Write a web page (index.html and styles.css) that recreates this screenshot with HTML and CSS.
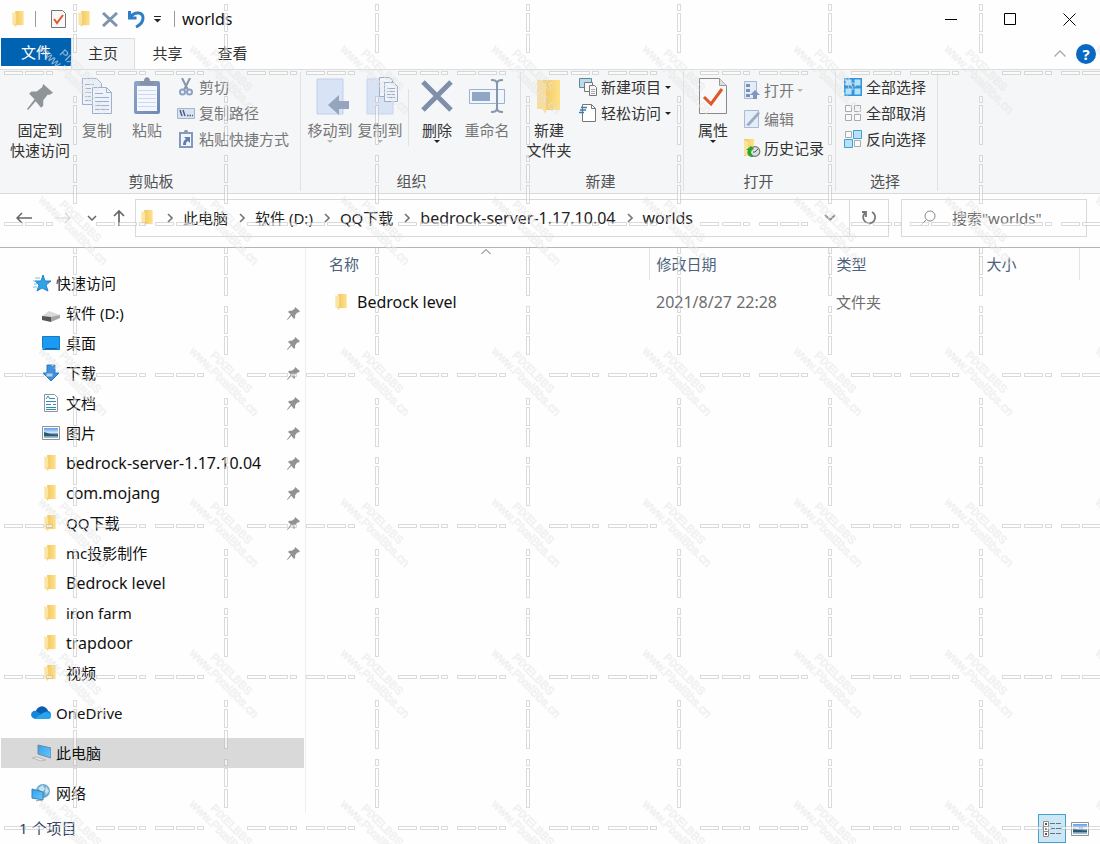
FILE: index.html
```html
<!DOCTYPE html>
<html lang="zh-CN">
<head>
<meta charset="utf-8">
<title>worlds</title>
<meta name="viewport" content="width=device-width, initial-scale=1">
<link rel="stylesheet" href="styles.css">
</head>
<body>
<svg class="sprite" aria-hidden="true">
  <defs>
    <linearGradient id="gold" x1="0" x2="1"><stop offset="0" stop-color="#f2c964"/><stop offset="1" stop-color="#ffe08a"/></linearGradient>
    <linearGradient id="board" x1="0" y1="0" x2="1" y2="1"><stop offset="0" stop-color="#8fa5c8"/><stop offset="1" stop-color="#6f88b3"/></linearGradient>
    <linearGradient id="sky" x1="0" y1="0" x2="0" y2="1"><stop offset="0" stop-color="#5b9bea"/><stop offset=".5" stop-color="#dcecf8"/><stop offset=".6" stop-color="#3c6480"/><stop offset="1" stop-color="#a9c9d9"/></linearGradient>
    <linearGradient id="screen" x1="0" y1="0" x2="1" y2="1"><stop offset="0" stop-color="#2fa0ee"/><stop offset="1" stop-color="#6cc8f8"/></linearGradient>
    <symbol id="folder" viewBox="0 0 12 17"><path d="M3 0h9v15H3z" fill="url(#gold)"/><path d="M0 1l4 2v14l-2-2H0z" fill="#fbe5a5"/><path d="M2 15l2-3v5z" fill="#f6d67e"/></symbol>
    <symbol id="pin" viewBox="0 0 24 24"><path d="M15 0l9 8-3 2-2 0-4 5 0 5-2 2-5-6-7 8-1-1 7-9-5-5 2-2 5 0 5-4z" fill="currentColor"/></symbol>
    <symbol id="more" viewBox="0 0 6 3"><path d="M0 0h6L3 3z" fill="currentColor"/></symbol>
    <symbol id="next" viewBox="0 0 6 10"><path d="M1 1l4 4-4 4" fill="none" stroke="#777" stroke-width="1.6"/></symbol>
    <symbol id="picture" viewBox="0 0 18 14"><path d="M.5.5h17v13H.5z" fill="#fff" stroke="#8c939b"/><path d="M2 2h14v10H2z" fill="url(#sky)"/><path d="M2 6c5 1 7 3 14 3v1H2z" fill="#2b5a75"/></symbol>
    <pattern id="mark" width="151" height="151" patternUnits="userSpaceOnUse">
      <g fill="#fff" fill-opacity=".6" stroke="#9a9a9a" stroke-opacity=".36">
        <path d="M4.500 71.500h18v3h-18zM25.500 71.500h18v3h-18zM46.500 71.500h6v3h-6zM96.500 71.500h18v3h-18zM118.500 71.500h18v3h-18zM139.500 71.500h6v3h-6z"/>
        <path d="M73.500 4.500h3v6h-3zM73.500 13.500h3v18h-3zM73.500 34.500h3v18h-3zM73.500 96.500h3v6h-3zM73.500 105.500h3v18h-3zM73.500 126.500h3v18h-3z"/>
      </g>
      <g class="mark-text"><text class="mark-name" transform="translate(59 54) rotate(45)">PIXELBBS</text><text transform="translate(38 50) rotate(45)">www.PixelBbs.cn</text></g>
    </pattern>
  </defs>
</svg>

<header class="titlebar">
  <svg class="folder"><use href="#folder"/></svg>
  <i class="rule"></i>
  <div class="quick">
    <button class="plain" aria-label="属性"><svg width="15" height="18" viewBox="0 0 15 18"><path d="M.5.5h11l3 3v14H.5z" fill="#f8f8f8" stroke="#777"/><path d="M3 9l3 4 6-8" fill="none" stroke="#e2562a" stroke-width="2"/></svg></button>
    <button class="plain" aria-label="新建文件夹"><svg class="folder"><use href="#folder"/></svg></button>
    <button class="plain" aria-label="删除"><svg width="16" height="15" viewBox="0 0 16 15"><path d="M1 1l14 13M15 1L1 14" stroke="#8093ad" stroke-width="3"/></svg></button>
    <button class="plain" aria-label="撤消"><svg width="17" height="18" viewBox="0 0 17 18"><path d="M1.500 1v7h7M2 7c5-6 13-5 13 1 0 4-3 7-7 9" fill="none" stroke="#2c7fc6" stroke-width="3"/></svg></button>
    <button class="plain" aria-label="自定义"><svg width="7" height="7" viewBox="0 0 7 7"><path d="M0 .5h7" stroke="#222"/><path d="M0 3h7L3.500 6.500z" fill="#222"/></svg></button>
  </div>
  <i class="rule"></i>
  <h1>worlds</h1>
  <div class="window-buttons">
    <button class="plain" aria-label="最小化"><svg width="13" height="13"><path d="M0 6.500h12" stroke="#000"/></svg></button>
    <button class="plain" aria-label="最大化"><svg width="13" height="13"><path d="M.5.5h11v11H.5z" fill="none" stroke="#000"/></svg></button>
    <button class="plain" aria-label="关闭"><svg width="13" height="13"><path d="M.5.500l12 12m0-12l-12 12" stroke="#000"/></svg></button>
  </div>
</header>

<nav class="tabs">
  <button class="tab file">文件</button><button class="tab active">主页</button><button class="tab">共享</button><button class="tab">查看</button>
  <div class="tab-tools">
    <button class="plain" aria-label="折叠功能区"><svg width="12" height="7"><path d="M.5 6.500L6 1l5.500 5.500" fill="none" stroke="#aaa" stroke-width="1.400"/></svg></button>
    <button class="help" aria-label="帮助">?</button>
  </div>
</nav>

<section class="ribbon">
  <div class="group clipboard">
    <div class="commands">
      <button class="big wide"><svg class="art pin-art" viewBox="0 0 60 38"><use href="#pin" x="17" y="7" width="26" height="26"/></svg><span>固定到<br>快速访问</span></button>
      <button class="big off"><svg class="art" viewBox="0 0 32 38"><g fill="#eef3fb" stroke="#9fb0cf"><path d="M1.500 1.500h14l5 5v21h-19z"/><path d="M11.500 10.500h14l5 5v21h-19z"/><path d="M25.500 10.500v5h5M4 7.500h9M4 11.500h6M4 15.500h6M4 19.500h6M4 23.500h6M14 16.500h8M14 20.500h14M14 24.500h14M14 28.500h14M14 32.500h14" fill="none"/></g></svg><span>复制</span></button>
      <button class="big off"><svg class="art" viewBox="0 0 32 38"><rect x="3" y="4" width="26" height="33" rx="2" fill="url(#board)"/><path d="M6 9h20v25H6z" fill="#f4f7fd"/><path d="M7 13.500h18M7 17.500h18M7 21.500h18M7 25.500h18M7 29.500h18" stroke="#cdd9ee"/><path d="M9 8V4h4c0-5 6-5 6 0h4v4z" fill="#8592a8"/></svg><span>粘贴</span></button>
      <div class="stack">
        <button class="small off"><svg viewBox="0 0 18 18"><path d="M5 0l6 12M13 0L7 12" stroke="#8794a9" stroke-width="2"/><g fill="none" stroke="#8ba0c2" stroke-width="2"><circle cx="5.500" cy="14" r="2.500"/><circle cx="12.500" cy="14" r="2.500"/></g></svg>剪切</button>
        <button class="small off"><svg viewBox="0 0 18 18"><path d="M.5 4.500h17v10H.5z" fill="#d8e2f1" stroke="#a6b5cc"/><path d="M3 6l2 6M6 6l2 6M10 11.500h1.500m1 0H14m1 0h1" stroke="#445d83" stroke-width="1.400"/></svg>复制路径</button>
        <button class="small off"><svg viewBox="0 0 18 18"><path d="M3 3h12v14H3z" fill="#f2f6fc" stroke="#8198bf" stroke-width="2"/><path d="M5 4V2h2c0-3 4-3 4 0h2v2z" fill="#8b9bb4"/><path d="M7 7h6v6l-2-2c-2 1-2 2-2 4H6c0-3 1-5 3-6z" fill="#5f7db0"/></svg>粘贴快捷方式</button>
      </div>
    </div>
    <h2>剪贴板</h2>
  </div>

  <div class="group organize">
    <div class="commands">
      <button class="big off"><svg class="art" viewBox="0 0 36 38"><path d="M5 2h26v35H5z" fill="#d8e3f5" stroke="#bfd0eb"/><path d="M16 28l11-10v6h10v8H27v6z" fill="#94a5bd"/></svg><span>移动到</span><svg class="more"><use href="#more"/></svg></button>
      <button class="big off"><svg class="art" viewBox="0 0 36 38"><path d="M5 2h26v35H5z" fill="#d8e3f5" stroke="#c5d5ed"/><g fill="#f1f5fc" stroke="#9badc9"><path d="M17.500.5h10l3 3v16h-13z"/><path d="M22.500 5.500h9l4 4v15h-13z"/><path d="M25 11.500h8M25 14.500h8M25 17.500h8M25 20.500h8"/></g></svg><span>复制到</span><svg class="more"><use href="#more"/></svg></button>
      <i class="divider"></i>
      <button class="big"><svg class="art" viewBox="0 0 36 38"><path d="M4 5l28 28M32 5L4 33" stroke="#7f8fab" stroke-width="5"/></svg><span>删除</span><svg class="more"><use href="#more"/></svg></button>
      <button class="big off"><svg class="art" viewBox="0 0 38 38"><path d="M1.500 12.500h35v14h-35z" fill="#f1f5fc" stroke="#9bb2d6"/><path d="M4 15h18v9H4z" fill="#91a6c4"/><path d="M23 3c5 0 6 1 6 5v22c0 4-1 5-6 5m12-32c-5 0-6 1-6 5v22c0 4 1 5 6 5" fill="none" stroke="#8596ad" stroke-width="2"/></svg><span>重命名</span></button>
    </div>
    <h2>组织</h2>
  </div>

  <div class="group create">
    <div class="commands">
      <button class="big"><svg class="art" viewBox="0 0 36 38"><path d="M12 3h17v30H12z" fill="url(#gold)"/><path d="M6 3h5l4 5v29l-4-5H6z" fill="#f8dda0"/></svg><span>新建<br>文件夹</span></button>
      <div class="stack">
        <button class="small"><svg viewBox="0 0 18 18"><path d="M.5.5h12v9H.5z" fill="#b9dceb" stroke="#60899f"/><g fill="#f7f7f7" stroke="#777"><path d="M5.500 4.500h8v9h-8z"/><path d="M10.500 7.500h5l2 2v8h-7z"/></g><path d="M12 11.500h4m-4 2h4m-4 2h4" stroke="#aaa"/></svg>新建项目<svg class="more"><use href="#more"/></svg></button>
        <button class="small"><svg viewBox="0 0 18 18"><path d="M3.500.5h9l4 4v13h-13z" fill="#fff" stroke="#777"/><path d="M12.500.5v4h4" fill="none" stroke="#777"/><path d="M2 3.500h6M1 6h6M0 8.500h5" stroke="#347fae" stroke-width="1.500"/></svg>轻松访问<svg class="more"><use href="#more"/></svg></button>
      </div>
    </div>
    <h2>新建</h2>
  </div>

  <div class="group open">
    <div class="commands">
      <button class="big"><svg class="art" viewBox="0 0 30 38"><path d="M1.500 1.500h20l7 7v28h-27z" fill="#f9f9f9" stroke="#8a8a8a"/><path d="M21.500 1.500v7h7" fill="#ddd" stroke="#999"/><path d="M6 20l7 7 11-15" fill="none" stroke="#df582a" stroke-width="3"/></svg><span>属性</span><svg class="more"><use href="#more"/></svg></button>
      <div class="stack loose">
        <button class="small off"><svg viewBox="0 0 18 18"><path d="M1.500.5h12v17h-12z" fill="#e4ecf8" stroke="#a5b8d6"/><path d="M3 3h4v3H3zm0 5h4v3H3zm0 5h4v3H3z" fill="#7891b8"/><path d="M12 9l5 5h-3v4h-4v-4H7z" fill="#8196ba"/></svg>打开<svg class="more"><use href="#more"/></svg></button>
        <button class="small off"><svg viewBox="0 0 18 18"><path d="M1.500.5h14v17h-14z" fill="#e5edf8" stroke="#a9bad4"/><path d="M3 15L13 4l2-2 2 1-2 3L6 16z" fill="#9cacbf"/></svg>编辑</button>
        <button class="small"><svg viewBox="0 0 18 18"><path d="M1 0h10v17H1z" fill="url(#gold)"/><path d="M1 1l4 2v14l-4-1z" fill="#fae2a0"/><circle cx="12" cy="12.500" r="4.800" fill="#d8dfdf" stroke="#777" stroke-width="1.200"/><path d="M12 13l3-3m-3 3h-2" fill="none" stroke="#555"/><path d="M11 18c-5 1-8-3-6-7l-2 0 5-4 3 3-2 1c-2 3-1 5 2 7z" fill="#27a72e"/></svg>历史记录</button>
      </div>
    </div>
    <h2>打开</h2>
  </div>

  <div class="group select">
    <div class="commands">
      <div class="stack">
        <button class="small"><svg viewBox="0 0 18 18"><path d="M0 0h18v18H0z" fill="#3396dc"/><path d="M1.500 1.500h6v6h-6zm9 0h6v6h-6zm-9 9h6v6h-6zm9 0h6v6h-6z" fill="#b5e2fb"/></svg>全部选择</button>
        <button class="small"><svg viewBox="0 0 18 18"><path d="M1.500 1.500h6v6h-6zm9 0h6v6h-6zm-9 9h6v6h-6zm9 0h6v6h-6z" fill="#fafafa" stroke="#aaa"/></svg>全部取消</button>
        <button class="small"><svg viewBox="0 0 18 18"><path d="M1.500 1.500h6v6h-6zm9 9h6v6h-6z" fill="#fafafa" stroke="#aaa"/><path d="M9.500.5h8v8h-8zm-9 9h8v8h-8z" fill="#b5e2fb" stroke="#4a9bd0"/></svg>反向选择</button>
      </div>
    </div>
    <h2>选择</h2>
  </div>
</section>

<section class="navigation">
  <div class="history">
    <button class="plain" aria-label="后退"><svg width="16" height="12"><path d="M6 1L1 6l5 5M1 6h15" fill="none" stroke="#666" stroke-width="1.500"/></svg></button>
    <button class="plain" aria-label="前进"><svg width="16" height="12"><path d="M10 1l5 5-5 5M15 6H0" fill="none" stroke="#d5d5d5" stroke-width="1.200"/></svg></button>
    <button class="plain" aria-label="最近位置"><svg width="10" height="6"><path d="M1 1l4 4 4-4" fill="none" stroke="#666" stroke-width="1.500"/></svg></button>
    <button class="plain" aria-label="向上"><svg width="12" height="16"><path d="M1 6l5-5 5 5M6 1v15" fill="none" stroke="#666" stroke-width="1.700"/></svg></button>
  </div>
  <div class="address">
    <svg class="folder"><use href="#folder"/></svg>
    <svg class="next"><use href="#next"/></svg><a href="#">此电脑</a>
    <svg class="next"><use href="#next"/></svg><a href="#">软件 (D:)</a>
    <svg class="next"><use href="#next"/></svg><a href="#">QQ下载</a>
    <svg class="next"><use href="#next"/></svg><a class="latin" href="#">bedrock-server-1.17.10.04</a>
    <svg class="next"><use href="#next"/></svg><a class="latin" href="#">worlds</a>
    <button class="plain expand" aria-label="展开地址"><svg width="12" height="8"><path d="M1 1l5 5 5-5" fill="none" stroke="#888" stroke-width="1.800"/></svg></button>
    <button class="plain refresh" aria-label="刷新"><svg width="16" height="16"><path d="M4 3a6 6 0 1 0 7-1M1 2h4v5" fill="none" stroke="#777" stroke-width="1.800"/></svg></button>
  </div>
  <label class="search"><svg width="16" height="16"><circle cx="10" cy="6" r="5" fill="none" stroke="#888"/><path d="M6.500 9.500L1 15" stroke="#888"/></svg><input type="search" aria-label="搜索" placeholder='搜索"worlds"'></label>
</section>

<main class="browser">
  <aside class="tree">
    <a class="root" href="#"><svg viewBox="0 0 20 18"><path d="M12 1l2 6h6l-5 4 2 6-6-3-5 3 2-6-4-4h6z" fill="#2fa3e8" stroke="#2383c5"/><path d="M4 4h5M2 7h4M3 10h3M2 13h4" stroke="#71bde9"/></svg>快速访问</a>
    <a href="#"><svg viewBox="0 0 18 18"><path d="M0 12l7-5 11 4-8 5H1z" fill="#d9d9d9"/><path d="M0 12l9 1v5l-9-2z" fill="#555"/><path d="M9 13l9-2v3l-9 4z" fill="#a5a5a5"/></svg>软件 (D:)<svg class="pin"><use href="#pin"/></svg></a>
    <a href="#"><svg viewBox="0 0 18 18"><path d="M.5 2.500h17v13H.5z" fill="#1a9bf0" stroke="#1679c2"/><path d="M3 14.500h12" stroke="#0a69ad"/></svg>桌面<svg class="pin"><use href="#pin"/></svg></a>
    <a href="#"><svg viewBox="0 0 18 18"><path d="M5 1h8v8h4l-8 8-8-8h4z" fill="#3f91df" stroke="#2878c4"/></svg>下载<svg class="pin"><use href="#pin"/></svg></a>
    <a href="#"><svg viewBox="0 0 18 18"><path d="M2.500.5h10l3 3v14h-13z" fill="#fff" stroke="#8b969d"/><path d="M4 5l2-3 2 3M8 4.500h5M4 7.500h10M4 10.500h5m2 0h3M4 13.500h10M4 15.500h10" stroke="#328caf" fill="none"/></svg>文档<svg class="pin"><use href="#pin"/></svg></a>
    <a href="#"><svg viewBox="0 0 18 18"><use href="#picture" y="2" width="18" height="14"/></svg>图片<svg class="pin"><use href="#pin"/></svg></a>
    <a class="latin" href="#"><svg viewBox="0 0 18 18"><use href="#folder" x="2" y="1" width="12" height="16"/></svg>bedrock-server-1.17.10.04<svg class="pin"><use href="#pin"/></svg></a>
    <a class="latin" href="#"><svg viewBox="0 0 18 18"><use href="#folder" x="2" y="1" width="12" height="16"/></svg>com.mojang<svg class="pin"><use href="#pin"/></svg></a>
    <a href="#"><svg viewBox="0 0 18 18"><use href="#folder" x="2" y="1" width="12" height="16"/></svg>QQ下载<svg class="pin"><use href="#pin"/></svg></a>
    <a href="#"><svg viewBox="0 0 18 18"><use href="#folder" x="2" y="1" width="12" height="16"/></svg>mc投影制作<svg class="pin"><use href="#pin"/></svg></a>
    <a class="latin" href="#"><svg viewBox="0 0 18 18"><use href="#folder" x="2" y="1" width="12" height="16"/></svg>Bedrock level</a>
    <a href="#"><svg viewBox="0 0 18 18"><use href="#folder" x="2" y="1" width="12" height="16"/></svg>iron farm</a>
    <a class="latin" href="#"><svg viewBox="0 0 18 18"><use href="#folder" x="2" y="1" width="12" height="16"/></svg>trapdoor</a>
    <a href="#"><svg viewBox="0 0 18 18"><use href="#folder" x="2" y="1" width="12" height="16"/></svg>视频</a>
    <a class="root spaced" href="#"><svg viewBox="0 0 20 18"><path d="M2 14c-4-3-1-8 3-7 2-6 10-6 12 0 4 0 4 8 0 8H4z" fill="#1685db"/><path d="M5 7c2-6 10-6 12 0l-3 1-4 2z" fill="#0b5ead"/><path d="M3 15l9-6c3-2 8 0 8 3 0 2-1 3-3 3z" fill="#29a5ee"/></svg>OneDrive</a>
    <a class="root spaced current" href="#"><svg viewBox="0 0 20 18"><path d="M7 1l13 3v10L7 10z" fill="url(#screen)" stroke="#6c8ba2"/><path d="M1 14l5-1 9 3-5 1z" fill="#e5e5e5" stroke="#bbb"/></svg>此电脑</a>
    <a class="root spaced" href="#"><svg viewBox="0 0 20 18"><circle cx="12" cy="7" r="7" fill="#6fa9cb"/><path d="M7 4l5-3 2 4-3 4zm8-2l3 5-3 4-1-4z" fill="#c6e2ed"/><path d="M1 5l11 3v8L1 14z" fill="url(#screen)" stroke="#3184bc"/><path d="M5 17l4-1 2 1" fill="none" stroke="#999"/></svg>网络</a>
  </aside>
  <div class="files">
    <svg class="sort" viewBox="0 0 10 6"><path d="M.5 5L5 .5 9.500 5" fill="none" stroke="#666"/></svg>
    <table>
      <colgroup><col class="name-col"><col class="date-col"><col class="type-col"><col class="size-col"><col></colgroup>
      <thead><tr><th>名称</th><th>修改日期</th><th>类型</th><th>大小</th><td></td></tr></thead>
      <tbody><tr><td class="latin"><span class="file-name"><svg class="folder"><use href="#folder"/></svg>Bedrock level</span></td><td class="latin">2021/8/27 22:28</td><td>文件夹</td><td></td><td></td></tr></tbody>
    </table>
  </div>
</main>

<footer class="status">
  <span>1 个项目</span>
  <div class="views">
    <button class="plain details" aria-label="详细信息"><svg width="20" height="18"><g fill="#fff" stroke="#8d8d8d"><path d="M1.500 1.500h5v5h-5zM1.500 6.500h5v5h-5zM1.500 11.500h5v5h-5z"/></g><path d="M3 4h2m-2 5h2m-2 5h2" stroke="#844" stroke-width="2"/><path d="M8 3.500h5m1 0h5M8 8.500h5m1 0h5M8 13.500h5m1 0h5" stroke="#66747e"/></svg></button>
    <button class="plain" aria-label="大缩略图"><svg width="18" height="14"><use href="#picture"/></svg></button>
  </div>
</footer>
<svg class="overlay" aria-hidden="true"><rect width="100%" height="100%" fill="url(#mark)"/></svg>
</body>
</html>
```

FILE: styles.css
```css
* { box-sizing: border-box; }
body {
  margin: 0;
  min-height: 100vh;
  display: flex;
  flex-direction: column;
  background: #fefefe;
  color: #111;
  font: 15px/20px "Noto Sans", "Noto Sans CJK SC", sans-serif;
}
button, input { font: inherit; color: inherit; }
button { border: 0; background: none; padding: 0; }
a { color: inherit; text-decoration: none; }
h1, h2 { margin: 0; font: inherit; }
svg { display: block; flex: none; }
.latin { font-size: 16px; }
.sprite { position: absolute; width: 0; height: 0; }
.plain { display: grid; place-items: center; }
.folder { width: 12px; height: 16px; }
.overlay { position: absolute; inset: 0; width: 100%; height: 100%; pointer-events: none; }
.mark-text { font: 12px "Liberation Sans", sans-serif; fill: #fff; fill-opacity: .6; stroke: #999; stroke-width: 1px; stroke-opacity: .12; }
.mark-name { font-size: 11px; }

.titlebar { height: 38px; display: flex; align-items: center; padding: 0 24px 0 12px; }
.rule { width: 1px; height: 16px; background: #999; }
.titlebar .folder + .rule { margin-left: 11px; }
.quick { display: flex; align-items: center; gap: 12px; margin: 0 13px 0 15px; }
.quick .plain:nth-child(4) { margin-left: -2px; }
.quick .plain:nth-child(5) { margin-left: -3px; }
.titlebar h1 { font-size: 16px; margin-left: 7px; }
.window-buttons { margin-left: auto; display: flex; gap: 46px; }

.tabs { height: 31px; display: flex; padding-left: 1px; }
.tab { width: 65px; height: 31px; padding-bottom: 2px; color: #333; }
.tab.file { width: 70px; height: 28px; padding-bottom: 0; background: #0063b1; color: #fff; }
.tab.active { width: 64px; background: #f5f6f7; border: 1px solid #dcdddd; border-bottom: 0; }
.tab-tools { margin-left: auto; display: flex; align-items: center; gap: 10px; padding-right: 4px; }
.help { width: 20px; height: 20px; border-radius: 50%; background: #0869c2; color: #fff; font-weight: bold; line-height: 20px; }

.ribbon { height: 125px; display: flex; background: #f5f6f7; border-top: 1px solid #dcdddd; border-bottom: 1px solid #d8dadb; }
.group { display: flex; flex-direction: column; border-right: 1px solid #dfe1e2; margin: 2px 0; padding: 5px 0 0; }
.group h2 { margin-top: auto; padding-right: 6px; text-align: center; color: #505254; }
.commands { display: flex; align-items: flex-start; }
.clipboard { width: 301px; padding-left: 8px; }
.organize { width: 220px; padding-left: 4px; }
.organize h2 { padding-right: 2px; }
.create { width: 163px; padding-left: 3px; }
.open { width: 152px; padding-left: 4px; }
.select { width: 102px; padding-left: 3px; }
.big { width: 50px; display: flex; flex-direction: column; align-items: center; white-space: nowrap; color: #333; }
.big.wide { width: 64px; }
.big .art { height: 38px; width: 38px; margin-bottom: 5px; }
.big .pin-art { width: 60px; color: #8f9497; }
.off { color: #777; }
.big.off .more, .small.off .more { color: #b5b5b5; }
.more { width: 6px; height: 3px; color: #222; }
.stack { display: grid; gap: 6px; padding-left: 5px; }
.stack.loose { gap: 9px; padding-top: 3px; }
.small { display: flex; align-items: center; gap: 4px; white-space: nowrap; color: #333; }
.loose .small { gap: 3px; }
.small > svg:first-child { width: 18px; height: 18px; }
.small.off { color: #777; }
.divider { width: 1px; height: 57px; margin: 12px 3px 0; background: #e0e2e3; }

.navigation { height: 54px; border-bottom: 1px solid #b4b4b4; display: flex; padding: 5px 13px 10px 16px; }
.history { width: 119px; display: flex; align-items: center; gap: 20px; }
.history .plain:nth-child(2) { margin-left: 3px; }
.history .plain:nth-child(n+3) { margin-left: -4px; }
.address { flex: 1; border: 1px solid #d9d9d9; display: flex; align-items: center; padding-left: 5px; white-space: nowrap; }
.address a { color: #222; }
.next { width: 6px; height: 10px; margin: 0 10px 0 11px; }
.address .folder + .next { margin-left: 14px; }
.expand { margin-left: auto; width: 38px; }
.refresh { width: 39px; height: 100%; border-left: 1px solid #d9d9d9; }
.search { width: 186px; margin-left: 12px; border: 1px solid #d9d9d9; display: flex; align-items: center; padding-left: 18px; gap: 16px; }
.search input { border: 0; outline: 0; padding: 0; min-width: 0; width: 120px; background: none; }
.search input::placeholder { color: #707070; opacity: 1; }

.browser { flex: 1; display: flex; }
.tree { width: 306px; padding: 20px 1px 0; border-right: 1px solid #eee; }
.tree a { height: 30px; display: flex; align-items: center; gap: 6px; padding: 0 4px 0 41px; }
.tree a > svg:first-child { width: 18px; height: 18px; }
.tree .root { padding-left: 30px; gap: 5px; }
.tree .root > svg:first-child { width: 20px; }
.tree .spaced { margin-top: 10px; }
.tree .current { background: #d9d9d9; }
.tree .pin { width: 13px; height: 13px; margin-left: auto; color: #929292; }

.files { flex: 1; position: relative; padding-left: 16px; }
.sort { position: absolute; top: 1px; left: 175px; width: 10px; height: 6px; }
table { width: 100%; border-collapse: collapse; table-layout: fixed; }
.name-col { width: 327px; }
.date-col { width: 180px; }
.type-col { width: 150px; }
.size-col { width: 100px; }
th { height: 32px; padding: 0 7px 1px; font-weight: normal; text-align: left; color: #4c607a; border-right: 1px solid #e4e4e4; }
tbody td { height: 44px; padding: 0 7px 1px; color: #6d6d6d; }
.file-name { display: flex; align-items: center; gap: 10px; padding-left: 6px; color: #111; }

.status { height: 31px; display: flex; align-items: center; justify-content: space-between; padding: 0 11px 0 19px; color: #33435f; }
.status span { padding-bottom: 2px; }
.views { display: flex; align-items: center; gap: 5px; }
.details { width: 28px; height: 29px; background: #cce8f6; border: 1px solid #4aa0cd; }
```
